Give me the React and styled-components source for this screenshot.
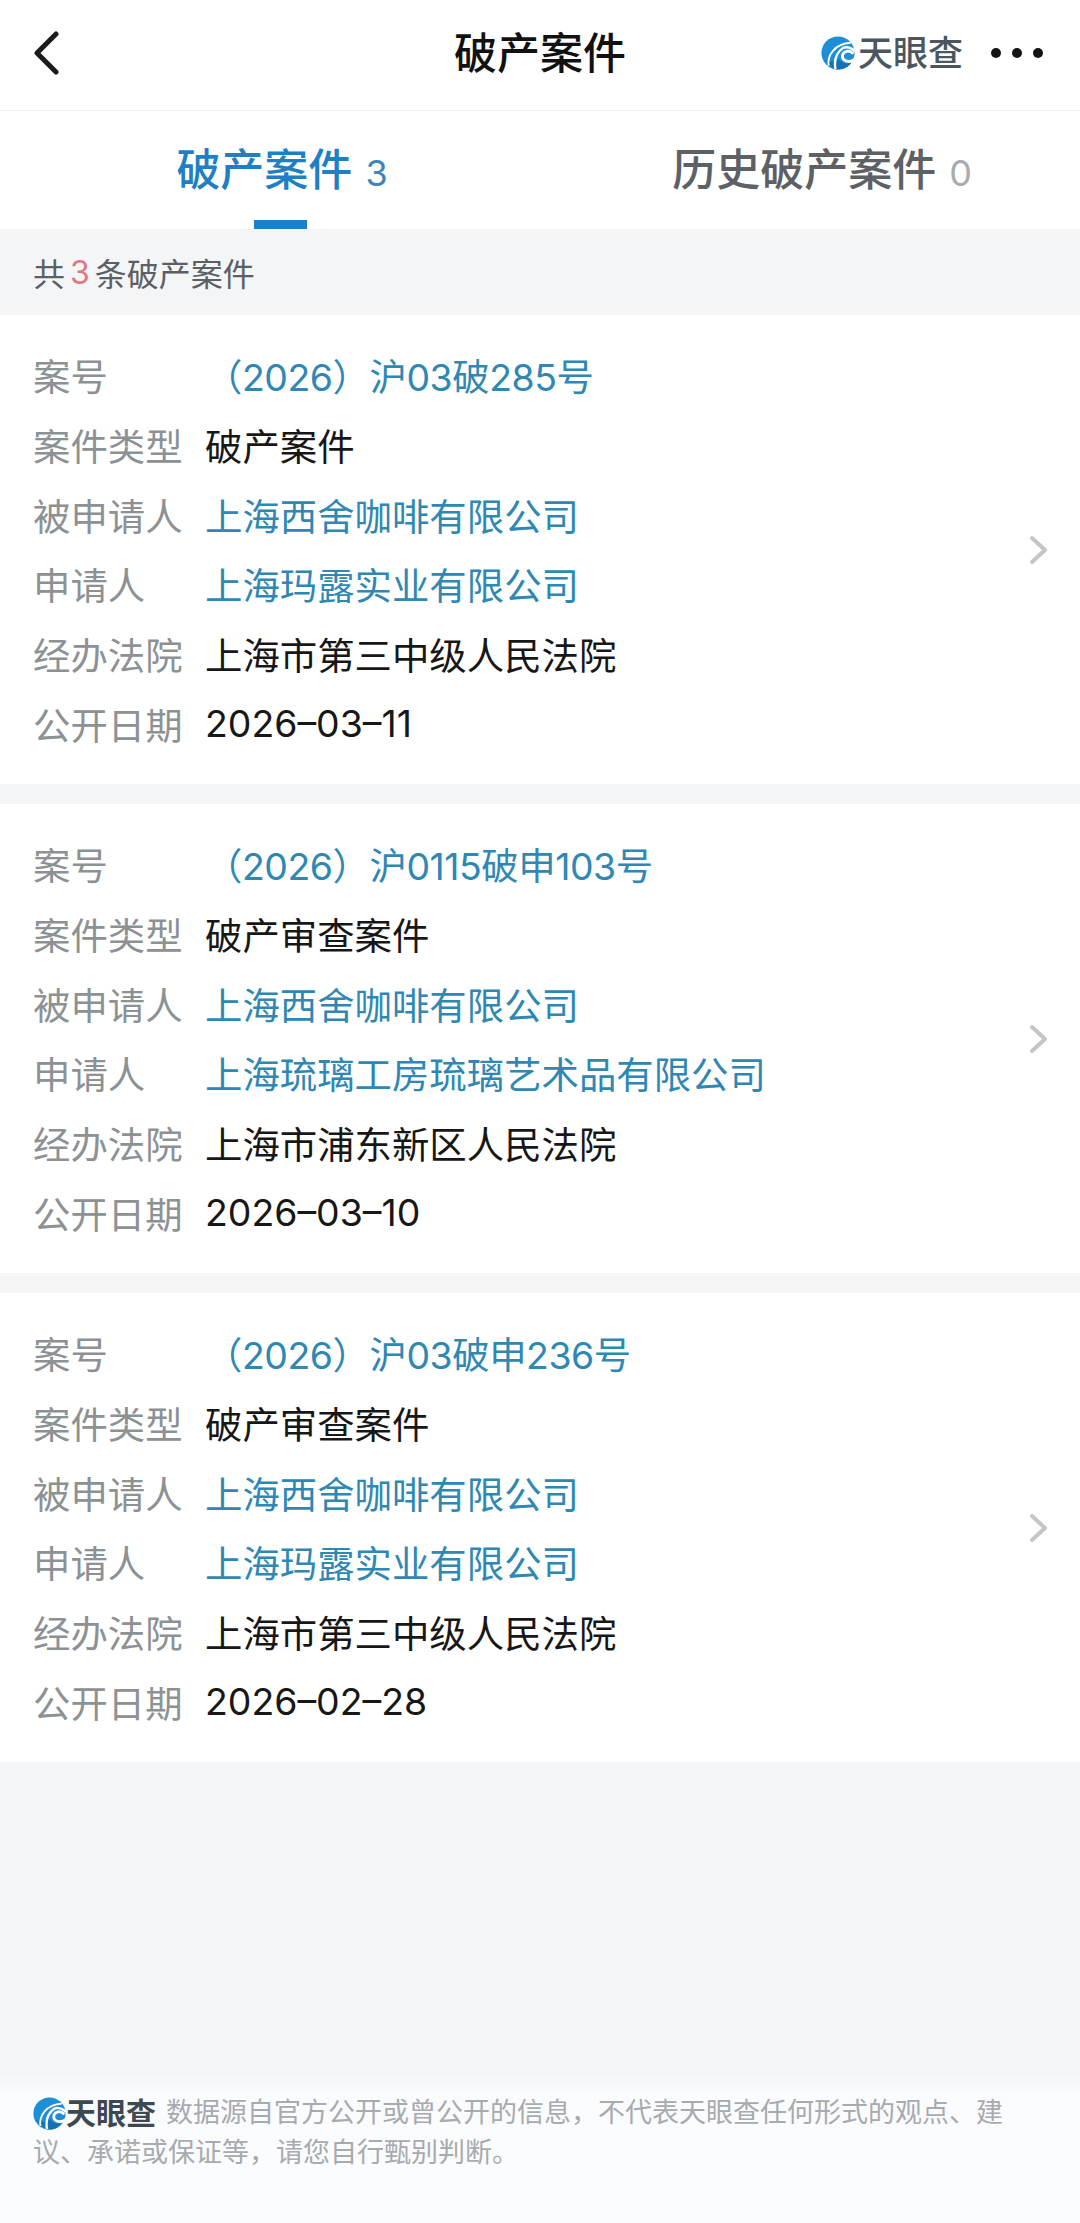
import React from "react";
import styled, { createGlobalStyle } from "styled-components";

const cases = [
  {
    no: "（2026）沪03破285号",
    type: "破产案件",
    respondent: "上海西舍咖啡有限公司",
    applicant: "上海玛露实业有限公司",
    court: "上海市第三中级人民法院",
    date: "2026–03–11",
  },
  {
    no: "（2026）沪0115破申103号",
    type: "破产审查案件",
    respondent: "上海西舍咖啡有限公司",
    applicant: "上海琉璃工房琉璃艺术品有限公司",
    court: "上海市浦东新区人民法院",
    date: "2026–03–10",
  },
  {
    no: "（2026）沪03破申236号",
    type: "破产审查案件",
    respondent: "上海西舍咖啡有限公司",
    applicant: "上海玛露实业有限公司",
    court: "上海市第三中级人民法院",
    date: "2026–02–28",
  },
];

const LogoMark = ({ size }) => (
  <svg width={size} height={size} viewBox="0 0 40 40">
    <circle cx="20" cy="20" r="19.5" fill="#1e8ed6" />
    <path d="M4 28C8 32 11 36 16 39C24 41 32 37 36 31C30 33 24 32 21 27C18 31 10 31 4 28Z" fill="#1272b4" />
    <path d="M9 35C7 23 16 9 35 8" fill="none" stroke="#fff" strokeWidth="2.2" />
    <path d="M17 39C15 28 19 19 26 14C31 12 36 14 40 18" fill="none" stroke="#fff" strokeWidth="2.8" />
    <path d="M40 27C36 31 29 31 26 27C24 23 26 19 30 18C33 17 36 19 38 21" fill="none" stroke="#fff" strokeWidth="3.4" />
  </svg>
);

export default function App() {
  return (
    <Page>
      <GlobalStyle />
      <NavBar>
        <BackIcon width="26" height="44" viewBox="0 0 26 44">
          <path d="M23 3L4 22L23 41" />
        </BackIcon>
        <NavTitle>破产案件</NavTitle>
        <NavRight>
          <LogoMark size={34} />
          <LogoText>天眼查</LogoText>
          <Dots>
            <Dot />
            <Dot />
            <Dot />
          </Dots>
        </NavRight>
      </NavBar>
      <Tabs>
        <Tab $active>
          破产案件<TabCount $active>3</TabCount>
        </Tab>
        <Tab>
          历史破产案件<TabCount>0</TabCount>
        </Tab>
      </Tabs>
      <Summary>
        共<RedNum>3</RedNum>条破产案件
      </Summary>
      <CardList>
        {cases.map((c) => (
          <Card key={c.no}>
            <Rows>
              <Row>
                <Label>案号</Label>
                <CaseNo>{c.no}</CaseNo>
              </Row>
              <Row>
                <Label>案件类型</Label>
                <Value>{c.type}</Value>
              </Row>
              <Row>
                <Label>被申请人</Label>
                <Value $link>{c.respondent}</Value>
              </Row>
              <Row>
                <Label>申请人</Label>
                <Value $link>{c.applicant}</Value>
              </Row>
              <Row>
                <Label>经办法院</Label>
                <Value>{c.court}</Value>
              </Row>
              <Row>
                <Label>公开日期</Label>
                <Value>{c.date}</Value>
              </Row>
            </Rows>
            <Chevron width="20" height="30" viewBox="0 0 20 30">
              <path d="M3 3L16 15L3 27" />
            </Chevron>
          </Card>
        ))}
      </CardList>
      <Footer>
        <FootLogo>
          <LogoMark size={33} />
          <FootLogoText>天眼查</FootLogoText>
        </FootLogo>
        <span>数据源自官方公开或曾公开的信息，不代表天眼查任何形式的观点、建议、承诺或保证等，请您自行甄别判断。</span>
      </Footer>
    </Page>
  );
}

const GlobalStyle = createGlobalStyle`
  html, body {
    margin: 0;
    padding: 0;
    background: #f3f5f7;
  }
  * {
    box-sizing: border-box;
  }
`;

const Page = styled.div`
  width: 1080px;
  height: 2223px;
  display: flex;
  flex-direction: column;
  overflow: hidden;
  background: #f3f5f7;
  font-family: "Inter", "Noto Sans CJK SC", "Liberation Sans", sans-serif;
`;

const NavBar = styled.header`
  height: 111px;
  flex-shrink: 0;
  display: grid;
  grid-template-columns: 1fr auto 1fr;
  align-items: center;
  padding: 0 37px 4px 33px;
  background: #fff;
  border-bottom: 1px solid #eeeff0;
`;

const BackIcon = styled.svg`
  fill: none;
  stroke: #1c1c1c;
  stroke-width: 5;
  stroke-linecap: round;
  stroke-linejoin: round;
`;

const NavTitle = styled.h1`
  margin: 0 0 0 4px;
  font-size: 43px;
  line-height: 60px;
  font-weight: 500;
  color: #111;
`;

const NavRight = styled.div`
  justify-self: end;
  display: flex;
  align-items: center;
`;

const LogoText = styled.span`
  margin-left: 3px;
  font-size: 35px;
  line-height: 40px;
  font-weight: 500;
  color: #4b565f;
`;

const Dots = styled.div`
  display: flex;
  gap: 11px;
  margin-left: 28px;
`;

const Dot = styled.i`
  display: block;
  width: 10px;
  height: 10px;
  border-radius: 50%;
  background: #141414;
`;

const Tabs = styled.nav`
  height: 118px;
  flex-shrink: 0;
  display: grid;
  grid-template-columns: 1fr 1fr;
  background: #fff;
`;

const Tab = styled.div`
  position: relative;
  display: flex;
  align-items: baseline;
  justify-content: center;
  padding: 27px 0 0 24px;
  font-size: 44px;
  line-height: 64px;
  font-weight: 500;
  color: ${(p) => (p.$active ? "#1f7fc4" : "#5d6064")};

  ${(p) =>
    p.$active &&
    `
    &::after {
      content: "";
      position: absolute;
      left: 254px;
      bottom: 0;
      width: 53px;
      height: 9px;
      background: #1f7fc4;
    }
  `}
`;

const TabCount = styled.span`
  margin-left: 13px;
  font-size: 36px;
  font-weight: 400;
  color: ${(p) => (p.$active ? "#3f86b8" : "#a9abad")};
`;

const Summary = styled.div`
  height: 86px;
  flex-shrink: 0;
  display: flex;
  align-items: center;
  padding-left: 33px;
  font-size: 32px;
  color: #5c5f63;
`;

const RedNum = styled.span`
  margin: 0 5px;
  color: #e0767e;
`;

const CardList = styled.main`
  display: flex;
  flex-direction: column;
  gap: 20px;
`;

const Card = styled.section`
  height: 469px;
  display: flex;
  align-items: center;
  padding: 0 31px 0 33px;
  background: #fff;
`;

const Rows = styled.div`
  flex: 1;
  display: flex;
  flex-direction: column;
`;

const Row = styled.div`
  height: 69.7px;
  display: grid;
  grid-template-columns: 172px 1fr;
  align-items: center;
  font-size: 37.4px;
`;

const Label = styled.span`
  color: #8c9194;
`;

const Value = styled.span`
  color: ${(p) => (p.$link ? "#2f88b3" : "#171717")};
`;

const CaseNo = styled(Value).attrs({ $link: true })`
  letter-spacing: -0.45px;
`;

const Chevron = styled.svg`
  fill: none;
  stroke: #c3c5c7;
  stroke-width: 4;
  stroke-linecap: round;
  stroke-linejoin: round;
`;

const Footer = styled.footer`
  margin-top: auto;
  height: 148px;
  flex-shrink: 0;
  padding: 18px 32px 0 33px;
  font-size: 27px;
  line-height: 39px;
  color: #a7aaae;
  background: linear-gradient(#f4f6f8, #fafbfd 20px, #fbfcfe);
`;

const FootLogo = styled.span`
  display: inline-flex;
  align-items: center;
  vertical-align: top;
  height: 40px;
  margin-right: 10px;
`;

const FootLogoText = styled.span`
  font-size: 30px;
  font-weight: 700;
  color: #3d4852;
`;
